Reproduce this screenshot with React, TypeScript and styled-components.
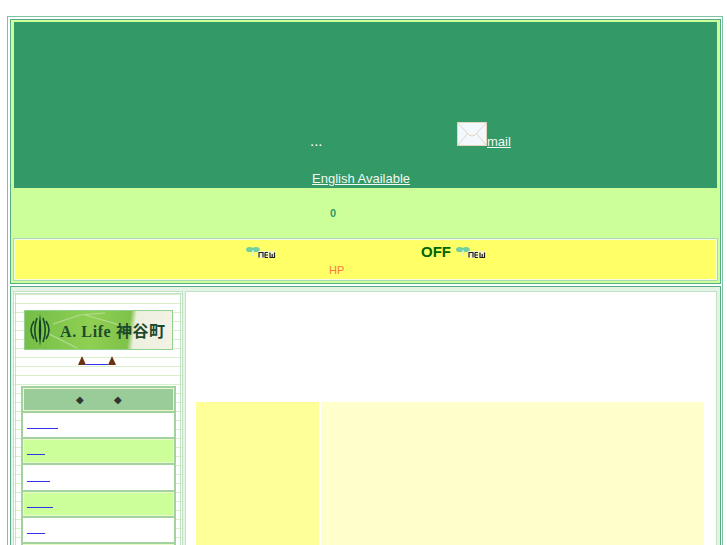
import { FC } from "react";
import styled, { createGlobalStyle } from "styled-components";

const GlobalStyle = createGlobalStyle`
  html, body {
    margin: 0;
    padding: 0;
    height: 545px;
    overflow: hidden;
    background: #fff;
    font-family: "Liberation Sans", Arial, sans-serif;
  }
`;

const Page = styled.div`
  box-sizing: border-box;
  width: 716px;
  height: 640px;
  margin: 16px 0 0 7px;
  padding: 2px 1px 2px 2px;
  border: 1px solid #7cc3a1;
`;

const TopBox = styled.div`
  box-sizing: border-box;
  height: 265px;
  border: 1px solid #57ad84;
  background: #ccff99;
  display: flex;
  flex-direction: column;
`;

const Hero = styled.header`
  box-sizing: border-box;
  height: 166px;
  margin: 2px 3px 0;
  background: #339966;
  color: #fff;
  font-size: 13px;
`;

const HeroLine = styled.div`
  display: flex;
  align-items: baseline;
  padding: 100px 0 0 296px;
`;

const Dots = styled.span`
  font-size: 15px;
  line-height: 16px;
  width: 147px;
`;

const HeroLink = styled.a`
  color: #f2f8f4;
  text-decoration: underline;
  font-size: 13px;
  line-height: 15px;
`;

const EnglishRow = styled.div`
  padding: 22px 0 0 298px;
  line-height: 15px;
`;

const Notice = styled.div`
  height: 50px;
  box-sizing: border-box;
  padding: 19px 0 0 319px;
  font-size: 11px;
  font-weight: 700;
  line-height: 13px;
  color: #339966;
`;

const Banner = styled.div`
  box-sizing: border-box;
  height: 43px;
  margin: 0 2px;
  border: 1px solid #a8d8b8;
  padding: 1px;
  background: #f6fbe8;
`;

const BannerFill = styled.div`
  height: 100%;
  background: #ffff66;
  display: flex;
  flex-direction: column;
`;

const BannerTop = styled.div`
  display: flex;
  align-items: center;
  height: 23px;
  padding-left: 231px;
`;

const OffText = styled.span`
  font-size: 15px;
  font-weight: 700;
  line-height: 18px;
  color: #006600;
  margin: 0 5px 0 145px;
`;

const BannerNote = styled.div`
  font-size: 11px;
  line-height: 13px;
  color: #ff7744;
  margin-top: 1px;
  padding-left: 314px;
`;

const BottomBox = styled.div`
  box-sizing: border-box;
  height: 400px;
  margin-top: 2px;
  border: 1px solid #57ad84;
  padding: 4px 3px 0 2px;
  background: #e4f3e4;
  display: flex;
  gap: 2px;
`;

const Sidebar = styled.aside`
  box-sizing: border-box;
  width: 170px;
  border: 3px double #bfe3c4;
  padding-top: 16px;
  background-color: #fff;
  background-image: repeating-linear-gradient(
    to bottom,
    #d8f0c8 0,
    #d8f0c8 1px,
    #fff 1px,
    #fff 9px
  );
`;

const LogoBox = styled.div`
  box-sizing: border-box;
  width: 149px;
  height: 40px;
  margin-left: 8px;
  border: 1px solid #8fd28b;
  padding-left: 5px;
  display: flex;
  align-items: center;
  gap: 10px;
  position: relative;
  background: linear-gradient(97deg, #74bd48 0%, #8fd052 45%, #7fc24a 70%, #edf0df 74%, #f4f2e6 100%);
`;

const Veins = styled.svg`
  position: absolute;
  left: 0;
  top: 0;
`;

const LogoText = styled.span`
  font-family: "Liberation Serif", "Noto Sans CJK JP", serif;
  font-size: 16px;
  font-weight: 700;
  letter-spacing: 0.6px;
  color: #1d4a2c;
  white-space: nowrap;
  position: relative;
`;

const AccessRow = styled.div`
  display: flex;
  justify-content: center;
  align-items: flex-end;
  height: 14px;
  margin-top: 2px;
  padding-right: 3px;
`;

const Triangle = styled.span`
  width: 0;
  height: 0;
  border-left: 4px solid transparent;
  border-right: 4px solid transparent;
  border-bottom: 9px solid #6b3410;
  margin-bottom: 1px;
`;

const BlankLink = styled.a<{ $width: number }>`
  display: block;
  width: ${(p) => p.$width}px;
  height: 1px;
  background: #3333ee;
  margin-bottom: 1px;
`;

const Menu = styled.nav`
  box-sizing: border-box;
  width: 155px;
  margin: 20px 0 0 5px;
  border: 2px solid #a2d29d;
  background: #a2d29d;
  display: flex;
  flex-direction: column;
  gap: 2px;
`;

const MenuHead = styled.div`
  box-sizing: border-box;
  height: 22.5px;
  border: 1px solid #f0f5d0;
  background: #99cc99;
  display: flex;
  align-items: center;
  justify-content: center;
  gap: 30px;
  color: #333;
  font-size: 10px;
`;

const MenuItem = styled.div<{ $alt?: boolean }>`
  box-sizing: border-box;
  height: 24.4px;
  border: 1px solid ${(p) => (p.$alt ? "#e8f8c8" : "#fff")};
  padding: 0 3px 6px;
  background: ${(p) => (p.$alt ? "#ccff99" : "#fff")};
  display: flex;
  align-items: flex-end;
`;

const Content = styled.main`
  box-sizing: border-box;
  flex: 1;
  border: 1px solid #bfe3c4;
  background: #fff;
  padding: 110px 12px 0 10px;
`;

const InfoRow = styled.div`
  display: flex;
  gap: 2px;
  height: 300px;
`;

const InfoLabel = styled.div`
  width: 123px;
  background: #ffff99;
`;

const InfoBody = styled.div`
  flex: 1;
  background: #ffffcc;
`;

const MailIcon: FC = () => (
  <svg width="30" height="24" viewBox="0 0 30 24">
    <rect x="0.5" y="0.5" width="29" height="23" fill="#f3f8ff" stroke="#e6d5bb" />
    <path d="M1 1 L12 13 Q15 15 18 13 L29 1 M1 23 L10.5 11.5 M29 23 L19.5 11.5" fill="none" stroke="#e6d5bb" />
  </svg>
);

const NewIcon: FC = () => (
  <svg width="30" height="14" viewBox="0 0 30 14">
    <ellipse cx="3.8" cy="4.5" rx="3.8" ry="2.6" fill="#6fd0a2" />
    <ellipse cx="10" cy="4.5" rx="3.8" ry="2.6" fill="#6fd0a2" />
    <path d="M7 5 V11" stroke="#d8f0dc" strokeWidth="1.4" />
    <rect x="12" y="6" width="17" height="7" fill="#f4f4c8" />
    <path d="M13 12.5 V7.5 H17 V12.5 M19 7.5 H22 M19 10 H22 M19 12.5 H22 M19 7.5 V12.5 M24 7.5 V12.5 H28.5 V7.5 M26.2 9 V12.5" fill="none" stroke="#222" strokeWidth="1.2" />
  </svg>
);

const LogoMark: FC = () => (
  <svg width="20" height="32" viewBox="0 0 20 32" style={{ position: "relative" }}>
    <g fill="none" stroke="#174a28" strokeWidth="1.6">
      <path d="M4 7 Q-2 16 4 25" />
      <path d="M7 4 Q2.5 16 7 28" />
      <path d="M13 4 Q17.5 16 13 28" />
      <path d="M16 7 Q22 16 16 25" />
    </g>
    <path d="M10 0 Q7.5 16 10 32 Q12.5 16 10 0Z" fill="#123d20" />
  </svg>
);

const menuItems = [31, 18, 23, 26, 18, 28];

const App: FC = () => (
  <>
    <GlobalStyle />
    <Page>
      <TopBox>
        <Hero>
          <HeroLine>
            <Dots>...</Dots>
            <MailIcon />
            <HeroLink href="#">mail</HeroLink>
          </HeroLine>
          <EnglishRow>
            <HeroLink href="#">English Available</HeroLink>
          </EnglishRow>
        </Hero>
        <Notice>0</Notice>
        <Banner>
          <BannerFill>
            <BannerTop>
              <NewIcon />
              <OffText>OFF</OffText>
              <NewIcon />
            </BannerTop>
            <BannerNote>HP</BannerNote>
          </BannerFill>
        </Banner>
      </TopBox>
      <BottomBox>
        <Sidebar>
          <LogoBox>
            <Veins width="147" height="38" viewBox="0 0 147 38">
              <path d="M28 13 L55 4 L80 2 M24 23 L52 37 M60 4 L95 14" fill="none" stroke="#b4dc94" strokeWidth="1.2" />
            </Veins>
            <LogoMark />
            <LogoText>A. Life 神谷町</LogoText>
          </LogoBox>
          <AccessRow>
            <Triangle />
            <BlankLink href="#" $width={22} />
            <Triangle />
          </AccessRow>
          <Menu>
            <MenuHead>
              <span>◆</span>
              <span>◆</span>
            </MenuHead>
            {menuItems.map((width, i) => (
              <MenuItem key={i} $alt={i % 2 === 1}>
                <BlankLink href="#" $width={width} />
              </MenuItem>
            ))}
          </Menu>
        </Sidebar>
        <Content>
          <InfoRow>
            <InfoLabel />
            <InfoBody />
          </InfoRow>
        </Content>
      </BottomBox>
    </Page>
  </>
);

export default App;
